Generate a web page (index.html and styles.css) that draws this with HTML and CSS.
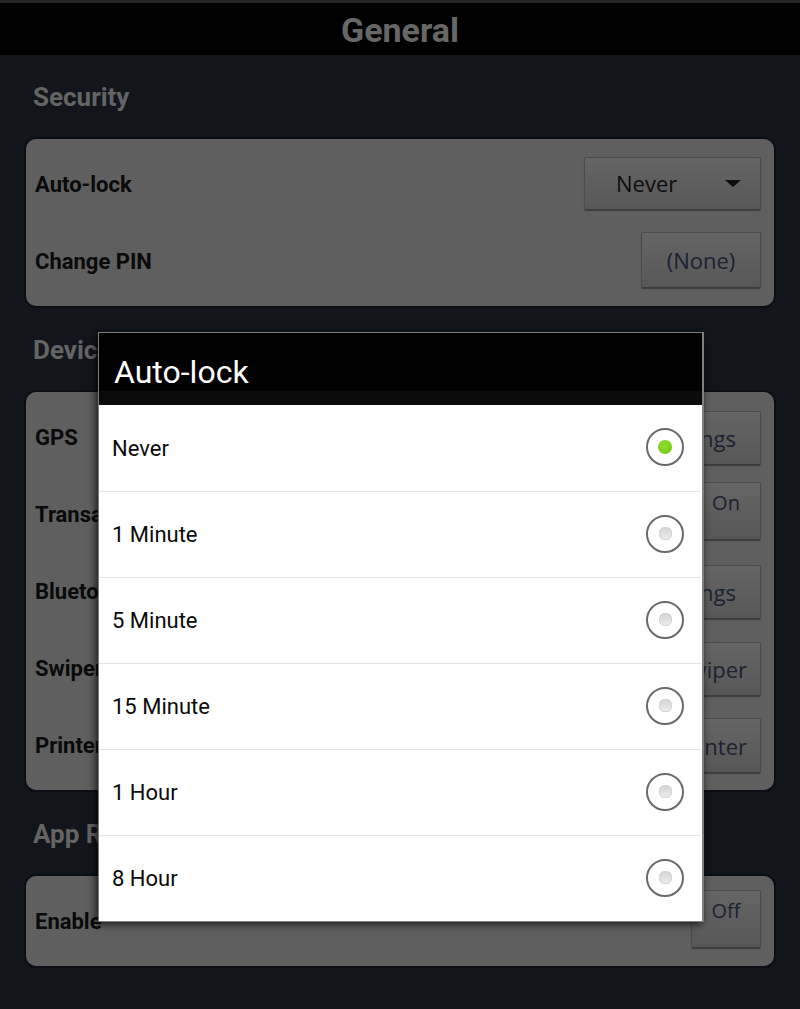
FILE: index.html
```html
<!DOCTYPE html>
<html lang="en">
<head>
<meta charset="utf-8">
<title>General</title>
<link rel="stylesheet" href="styles.css">
</head>
<body>
<div class="statusbar"></div>
<header class="titlebar"><h1 class="title">General</h1></header>
<main class="settings">
  <section class="group">
    <h2 class="group-title">Security</h2>
    <div class="card">
      <div class="row">
        <span class="label">Auto-lock</span>
        <button class="btn spinner"><span>Never</span><span class="caret"></span></button>
      </div>
      <div class="row">
        <span class="label">Change PIN</span>
        <button class="btn pin">(None)</button>
      </div>
    </div>
  </section>
  <section class="group">
    <h2 class="group-title">Device</h2>
    <div class="card">
      <div class="row">
        <span class="label">GPS</span>
        <button class="btn wide">Settings</button>
      </div>
      <div class="row">
        <span class="label">Transactions</span>
        <button class="btn toggle">On</button>
      </div>
      <div class="row">
        <span class="label">Bluetooth</span>
        <button class="btn wide">Settings</button>
      </div>
      <div class="row">
        <span class="label">Swiper</span>
        <button class="btn">Swiper</button>
      </div>
      <div class="row">
        <span class="label">Printer</span>
        <button class="btn tall">Printer</button>
      </div>
    </div>
  </section>
  <section class="group">
    <h2 class="group-title">App Reporting</h2>
    <div class="card">
      <div class="row">
        <span class="label">Enable</span>
        <button class="btn toggle off">Off</button>
      </div>
    </div>
  </section>
</main>

<div class="dialog" role="dialog" aria-label="Auto-lock">
  <div class="dialog-title">Auto-lock</div>
  <div class="dialog-band"></div>
  <ul class="options">
    <li class="option"><span>Never</span><span class="radio checked"></span></li>
    <li class="option"><span>1 Minute</span><span class="radio"></span></li>
    <li class="option"><span>5 Minute</span><span class="radio"></span></li>
    <li class="option"><span>15 Minute</span><span class="radio"></span></li>
    <li class="option"><span>1 Hour</span><span class="radio"></span></li>
    <li class="option"><span>8 Hour</span><span class="radio"></span></li>
  </ul>
</div>
</body>
</html>
```
FILE: styles.css
```css
* { box-sizing: border-box; }

html, body {
  margin: 0;
  padding: 0;
}

body {
  width: 800px;
  height: 1009px;
  overflow: hidden;
  background: #12161c;
  font-family: Roboto, "Noto Sans", sans-serif;
  position: relative;
}

.statusbar {
  height: 3px;
  background: #262626;
}

.titlebar {
  height: 52px;
  background: #000;
  display: flex;
  align-items: center;
  justify-content: center;
}

.title {
  margin: 0;
  font-size: 34px;
  font-weight: 700;
  color: #676767;
  line-height: 1;
  padding-top: 2px;
}

.settings {
  padding: 0 24px;
}

.group-title {
  margin: 0;
  height: 82px;
  display: flex;
  align-items: center;
  padding-left: 9px;
  padding-top: 2px;
  font-size: 26px;
  font-weight: 700;
  color: #646464;
}

.card {
  background: #5f5f5f;
  border: 2px solid #0b0f14;
  border-radius: 12px;
  padding: 7px 13px 6px 9px;
}

.row {
  height: 77px;
  display: flex;
  align-items: center;
  justify-content: space-between;
}

.label {
  font-size: 22px;
  font-weight: 700;
  color: #0a0a0a;
  white-space: nowrap;
}

.btn {
  font-family: "Open Sans", "DejaVu Sans", sans-serif;
  font-size: 22px;
  color: #1b2230;
  height: 54px;
  padding: 0 13px;
  background: linear-gradient(#656565, #575757);
  border: 1px solid #4c4c4c;
  border-bottom-color: #3c3c3c;
  border-radius: 2px;
  box-shadow: 0 1px 1px rgba(0, 0, 0, 0.35);
  display: flex;
  align-items: center;
  justify-content: center;
}

.btn.wide { padding: 0 24px; }
.btn.tall { height: 55px; }

.spinner {
  width: 177px;
  height: 53px;
  justify-content: space-between;
  padding: 0 19px 0 31px;
  color: #0d0d0d;
  margin-top: -3px;
}

.caret {
  width: 0;
  height: 0;
  border-left: 8px solid transparent;
  border-right: 8px solid transparent;
  border-top: 7px solid #0d0d0d;
}

.pin {
  width: 120px;
  height: 56px;
  margin-top: -4px;
}

.toggle {
  width: 70px;
  height: 58px;
  align-items: flex-start;
  padding-top: 6px;
  font-size: 20px;
  margin-top: -8px;
}

.toggle.off {
  margin-top: -6px;
}

/* Dialog */
.dialog {
  position: absolute;
  left: 98px;
  top: 332px;
  width: 606px;
  background: #fff;
  border: 1px solid #7d7d7d;
  border-right: 2px solid #808080;
  box-shadow: -2px 2px 8px rgba(0, 0, 0, 0.75);
}

.dialog-title {
  height: 58px;
  background: #000;
  color: #fff;
  font-size: 32px;
  display: flex;
  align-items: flex-end;
  padding-left: 15px;
  line-height: normal;
}

.dialog-band {
  height: 14px;
  background: #0b0b0b;
}

.options {
  list-style: none;
  margin: 0;
  padding: 0;
}

.option {
  height: 86px;
  display: flex;
  align-items: center;
  justify-content: space-between;
  padding: 0 17px 0 13px;
  font-size: 22px;
  color: #0a0a0a;
  margin: 0 1px 0 0;
}

.option + .option {
  border-top: 1px solid #e3e3e3;
}

.radio {
  width: 38px;
  height: 38px;
  border-radius: 50%;
  border: 2px solid #6a6a6a;
  display: flex;
  align-items: center;
  justify-content: center;
  margin-top: -2px;
}

.radio::after {
  content: "";
  width: 11px;
  height: 11px;
  border-radius: 40%;
  background: linear-gradient(#d4d4d4, #ececec);
  border: 1px solid #d0d0d0;
}

.radio.checked::after {
  width: 14px;
  height: 14px;
  border-radius: 50%;
  border: none;
  background: radial-gradient(circle at 45% 40%, #8ee02a, #6cc413);
}
```
